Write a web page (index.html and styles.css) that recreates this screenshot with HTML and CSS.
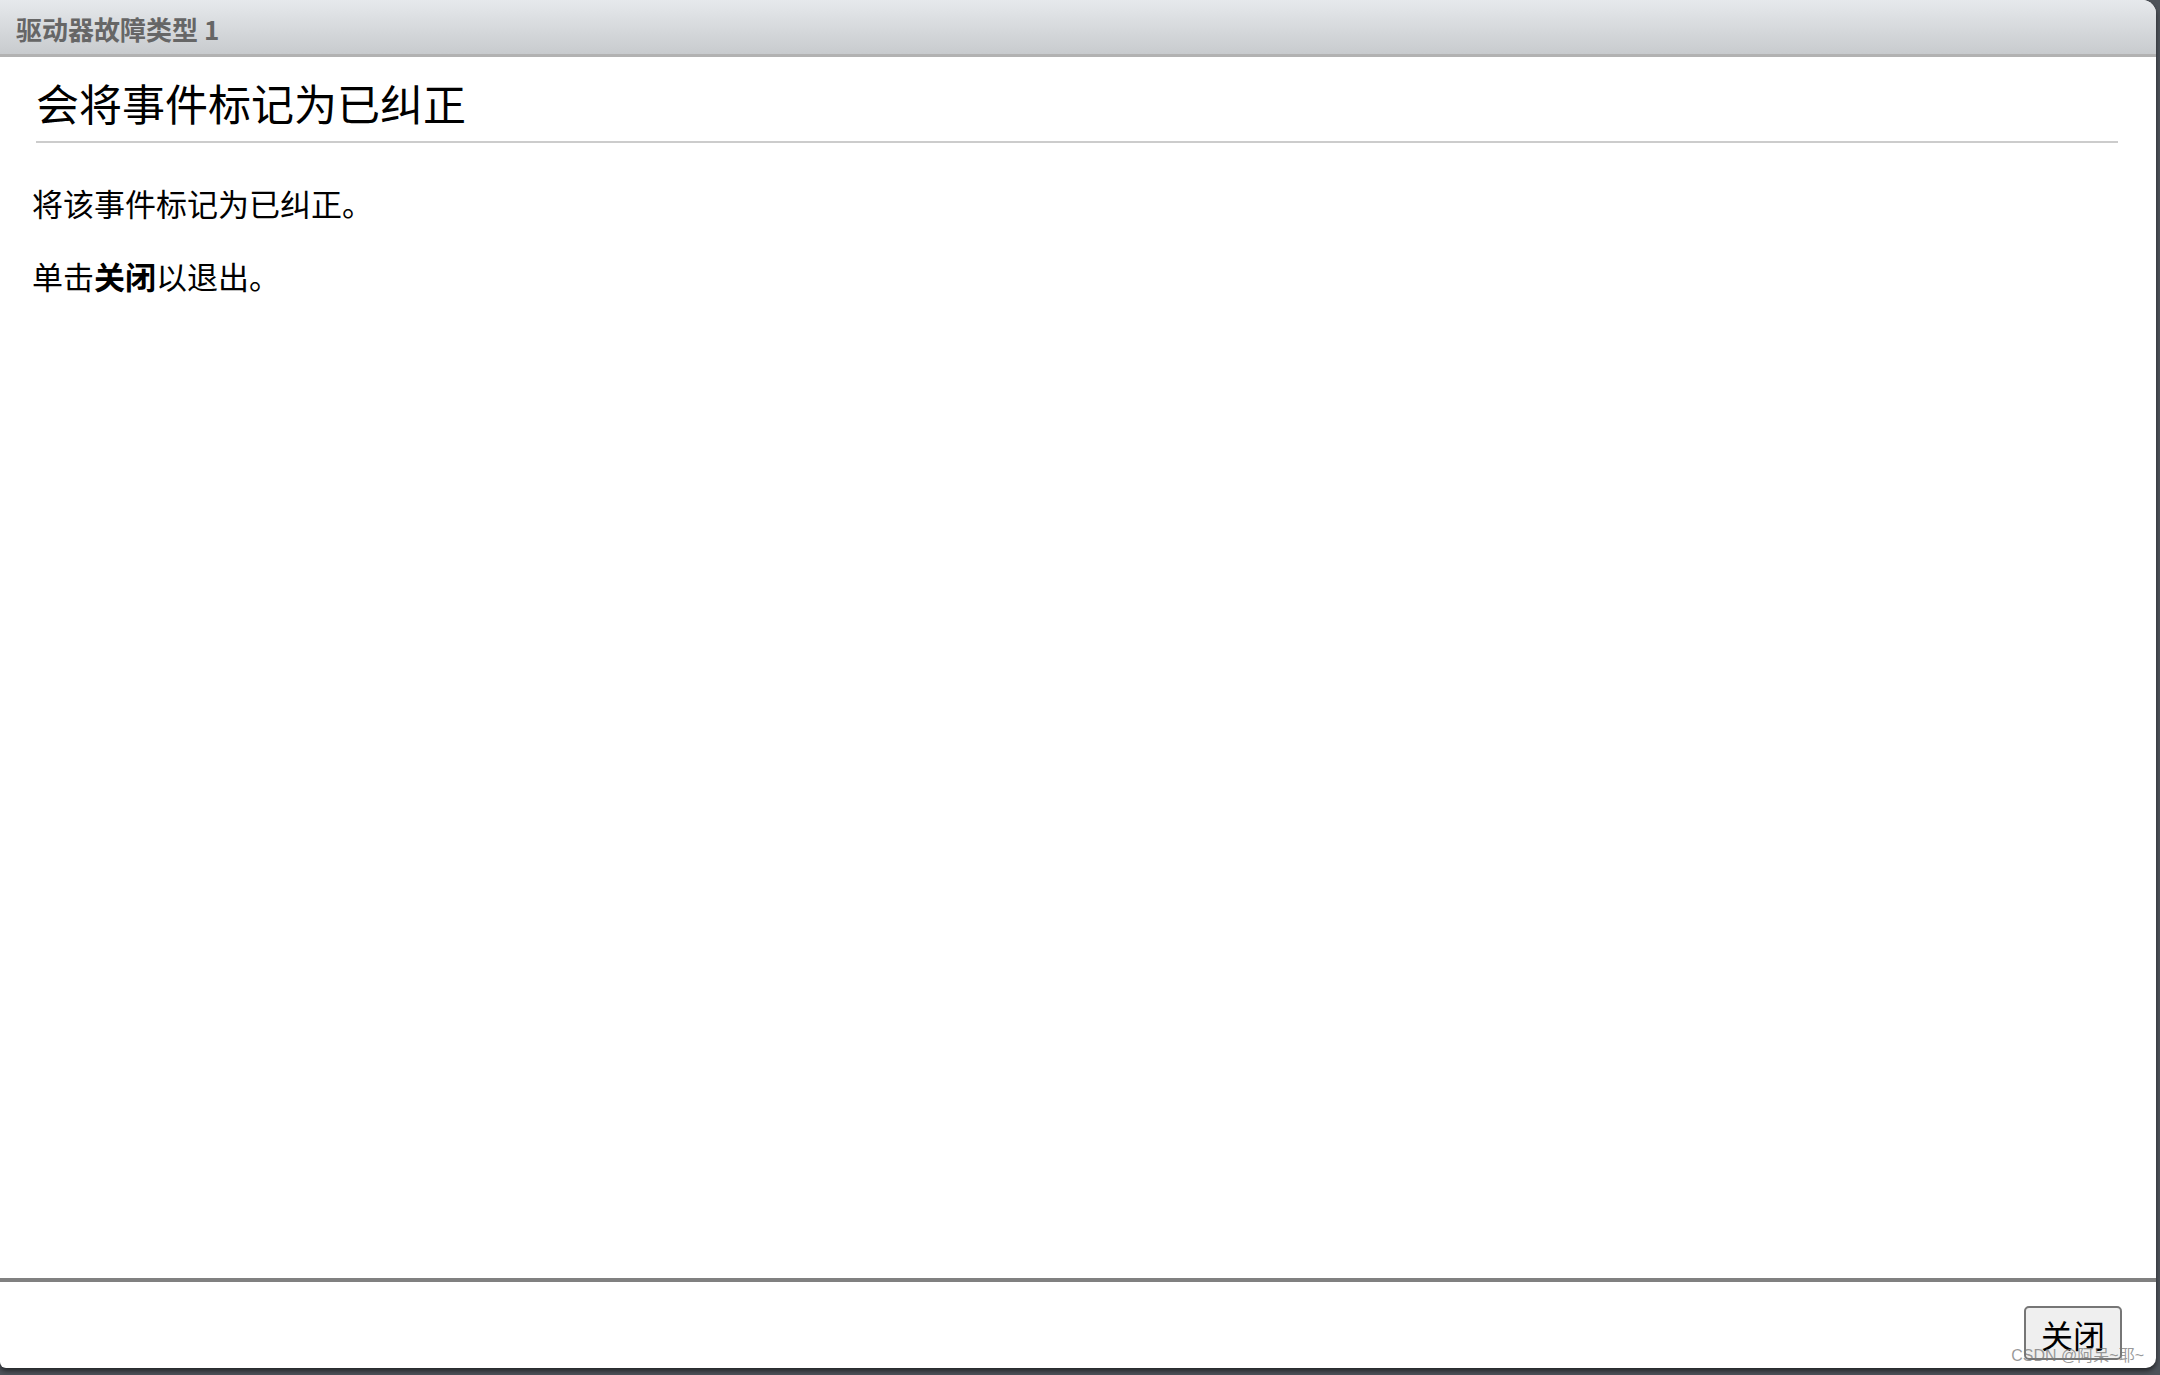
FILE: index.html
```html
<!DOCTYPE html>
<html lang="zh-CN">
<head>
    <meta charset="UTF-8">
    <title>驱动器故障类型 1</title>
    <link rel="stylesheet" href="styles.css">
</head>
<body>
    <div class="dialog">
        <div class="titlebar">驱动器故障类型 1</div>

        <div class="content">
            <h1>会将事件标记为已纠正</h1>
            <p>将该事件标记为已纠正。</p>
            <p>单击<strong>关闭</strong>以退出。</p>
        </div>

        <div class="footer">
            <button class="close-btn">关闭</button>
            <span class="watermark">CSDN @阿呆~耶~</span>
        </div>
    </div>
</body>
</html>
```

FILE: styles.css
```css
body {
    margin: 0;
    background: #4e535a;
    font-family: "Noto Sans CJK SC", "Noto Sans", sans-serif;
    color: #000;
    height: 1375px;
    overflow: hidden;
}

.dialog {
    width: 2156px;
    height: 1368px;
    background: white;
    border-radius: 0 14px 10px 6px;
    box-shadow: 0 3px 5px rgba(0, 0, 0, 0.55);
    display: flex;
    flex-direction: column;
    overflow: hidden;
}

.titlebar {
    height: 54px;
    line-height: 58px;
    padding-left: 16px;
    background: linear-gradient(#e6e9ec, #c8cbce);
    border-bottom: 3px solid #b2b2b2;
    color: #666;
    font-size: 26px;
    font-weight: bold;
    flex-shrink: 0;
}

.content {
    flex: 1;
    padding: 0 32px;
}

.content h1 {
    margin: 15px 6px 0 4px;
    padding-bottom: 9px;
    border-bottom: 2px solid #cccccc;
    font-size: 43px;
    font-weight: normal;
    line-height: 60px;
}

.content p {
    margin: 40px 0 0;
    font-size: 31px;
    line-height: 40px;
}

.content p + p {
    margin-top: 33px;
}

.footer {
    height: 86px;
    border-top: 4px solid #808080;
    flex-shrink: 0;
    position: relative;
    display: flex;
    justify-content: flex-end;
    align-items: flex-start;
    padding-right: 34px;
}

.close-btn {
    margin-top: 24px;
    width: 98px;
    height: 54px;
    background: #efefef;
    border: 2px solid #767676;
    border-radius: 5px;
    font-family: "Noto Sans CJK SC", sans-serif;
    font-size: 32px;
    line-height: 1;
    padding: 2px 0 0;
    color: #000;
}

.watermark {
    position: absolute;
    right: 12px;
    bottom: 2px;
    font-size: 16px;
    color: rgba(120, 120, 120, 0.75);
    font-family: "Liberation Sans", "Noto Sans CJK SC", sans-serif;
}
```
